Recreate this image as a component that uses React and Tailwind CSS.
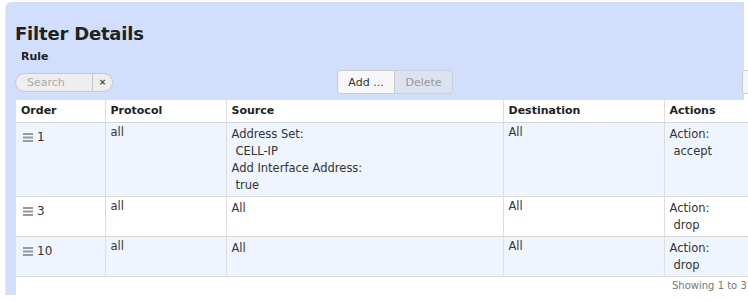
import React from "react";

const rows = [
  {
    order: 1,
    protocol: "all",
    source: [
      ["Address Set:", false],
      ["CELL-IP", true],
      ["Add Interface Address:", false],
      ["true", true],
    ],
    destination: "All",
    action: "accept",
    striped: true,
  },
  { order: 3, protocol: "all", source: [["All", false]], destination: "All", action: "drop", striped: false },
  { order: 10, protocol: "all", source: [["All", false]], destination: "All", action: "drop", striped: true },
];

const Grip = () => (
  <svg width="10" height="9" viewBox="0 0 10 9" className="shrink-0">
    <rect x="0" y="0" width="10" height="2" fill="#9a9a9a" />
    <rect x="0" y="3.5" width="10" height="2" fill="#9a9a9a" />
    <rect x="0" y="7" width="10" height="2" fill="#9a9a9a" />
  </svg>
);

export default function App() {
  return (
    <div className="w-[748px] h-[301px] overflow-hidden bg-white text-[11.5px] leading-[17px] text-[#333] font-['DejaVu_Sans',Verdana,sans-serif]">
      <div className="ml-[5px] mt-[2px] w-[739px] bg-[#d2dffc] rounded-tl-[6px] border-l border-[#e3eafd] pl-[9px] pt-[20px]">
        {/* HEADER */}
        <h1 className="text-[18px] leading-[24px] font-bold text-[#222] tracking-[-0.2px]">Filter Details</h1>
        <div className="mt-[3px] ml-[6px] text-[11px] leading-[16px] font-bold text-[#222]">Rule</div>

        {/* TOOLBAR */}
        <div className="mt-[5px] flex items-start h-[24px]">
          <div className="shrink-0 mt-[3px] flex h-[19px] w-[98px] rounded-full border border-[#c8c8c8] bg-[#eeeeee] overflow-hidden">
            <div className="flex-1 pl-[11px] text-[11px] leading-[17px] text-[#aaa]">Search</div>
            <div className="w-[20px] border-l border-[#c8c8c8] flex items-center justify-center text-[9px] font-bold text-[#444]">×</div>
          </div>
          <div className="shrink-0 ml-[224px] flex h-[24px]">
            <button className="w-[58px] h-[24px] rounded-l-[3px] border border-[#ccc] bg-[#f7f7f7] text-[11px] text-[#333]">Add ...</button>
            <button className="w-[58px] h-[24px] rounded-r-[3px] border border-l-0 border-[#c9d0dc] bg-[#dbe3f1] text-[11px] text-[#999]">Delete</button>
          </div>
          <div className="shrink-0 ml-[289px] w-[20px] h-[24px] rounded-l-[3px] border border-[#ccc] bg-[#f7f7f7]" />
        </div>

        {/* TABLE */}
        <div className="mt-[6px] ml-[1px] w-[760px] bg-white">
          <table className="table-fixed border-collapse w-[760px]">
            <colgroup>
              <col className="w-[89px]" />
              <col className="w-[121px]" />
              <col className="w-[277px]" />
              <col className="w-[161px]" />
              <col />
            </colgroup>
            <thead>
              <tr className="bg-white border-b border-[#d8d8d8]">
                {["Order", "Protocol", "Source", "Destination", "Actions"].map((h) => (
                  <th key={h} className="text-left text-[11px] font-bold text-[#222] px-[5px] py-0 border-r border-[#dedede] leading-[22px]">
                    {h}
                  </th>
                ))}
              </tr>
            </thead>
            <tbody>
              {rows.map((r, idx) => (
                <tr key={r.order} className={`${r.striped ? "bg-[#eef5fe]" : "bg-white"} border-b border-[#d8d8d8] align-top`}>
                  <td className={`px-[7px] pt-[4px] border-r border-[#dedede] ${idx === rows.length - 1 ? "pb-[6px]" : "pb-[5px]"}`}>
                    <div className="flex items-center gap-[4px] h-[17px] mt-[2px] text-[12px]">
                      <Grip />
                      <span>{r.order}</span>
                    </div>
                  </td>
                  <td className="px-[5px] pt-[1px] border-r border-[#dedede]">{r.protocol}</td>
                  <td className="px-[5px] pt-[3px] pb-[2px] border-r border-[#dedede]">
                    {r.source.map(([t, indent], i) => (
                      <div key={i} className={indent ? "pl-[4px]" : ""}>{t}</div>
                    ))}
                  </td>
                  <td className="px-[5px] pt-[1px] border-r border-[#dedede]">{r.destination}</td>
                  <td className="px-[5px] pt-[3px] pb-[2px]">
                    <div>Action:</div>
                    <div className="pl-[4px]">{r.action}</div>
                  </td>
                </tr>
              ))}
            </tbody>
          </table>
          <div className="h-[18px] pl-[656px] text-[10px] leading-[18px] text-[#777] whitespace-nowrap">Showing 1 to 3</div>
        </div>
      </div>
    </div>
  );
}
